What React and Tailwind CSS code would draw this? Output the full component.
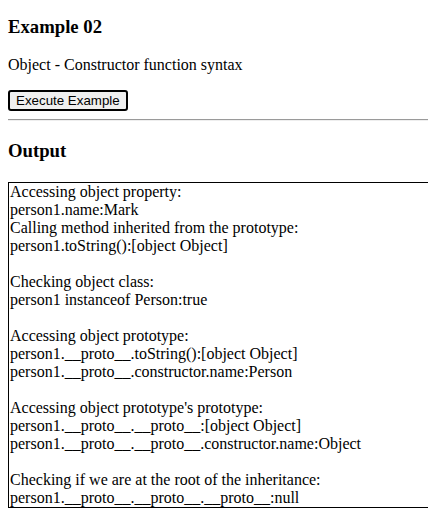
import React from "react";

const lines = [
  "Accessing object property:",
  "person1.name:Mark",
  "Calling method inherited from the prototype:",
  "person1.toString():[object Object]",
  "",
  "Checking object class:",
  "person1 instanceof Person:true",
  "",
  "Accessing object prototype:",
  "person1.__proto__.toString():[object Object]",
  "person1.__proto__.constructor.name:Person",
  "",
  "Accessing object prototype's prototype:",
  "person1.__proto__.__proto__:[object Object]",
  "person1.__proto__.__proto__.constructor.name:Object",
  "",
  "Checking if we are at the root of the inheritance:",
  "person1.__proto__.__proto__.__proto__:null",
];

export default function App() {
  return (
    <div className="w-[428px] h-[528px] overflow-hidden bg-white text-black font-['Liberation_Serif','Times_New_Roman',serif]">
      <div className="w-[640px] px-[8px] pt-[16px]">
        <h3 className="text-[18.72px] font-bold leading-[22px]">Example 02</h3>
        <p className="mt-[18px] text-[16px] leading-[18px]">Object - Constructor function syntax</p>
        <div className="mt-[16px] flex">
          <button className="h-[21px] px-[6px] border-2 border-black rounded-[3px] bg-[#efefef] text-[13.33px] leading-[15px] font-['Liberation_Sans',Arial,sans-serif] text-black">
            Execute Example
          </button>
        </div>
        <hr className="mt-[8px] h-0 border-t border-b border-t-[#9a9a9a] border-b-[#eeeeee]" />
        <h3 className="mt-[19px] text-[18.72px] font-bold leading-[22px]">Output</h3>
        <div className="mt-[20px] border border-black text-[16px] leading-[18px] pl-[1px]">
          {lines.map((l, i) => (
            <div key={i} className="h-[18px] whitespace-pre">
              {l}
            </div>
          ))}
        </div>
      </div>
    </div>
  );
}
